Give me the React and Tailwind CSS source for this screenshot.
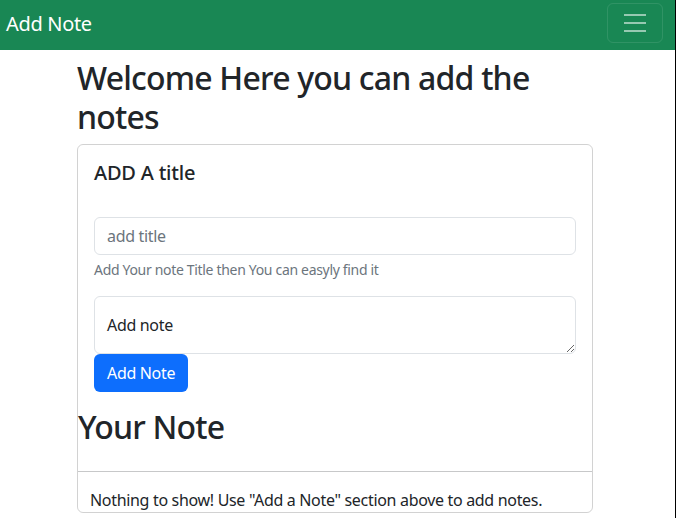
import React from "react";

export default function App() {
  return (
    <div className="min-h-[518px] bg-white border-r border-black font-['Noto_Sans',sans-serif] tracking-[-0.02em] text-[#212529]">
      <nav className="h-[50px] bg-[#198754] flex justify-between pl-[6px] pr-[12px]">
        <span className="text-[20px] leading-[30px] text-white mt-[9px]">Add Note</span>
        <button className="mt-[3px] w-[56px] h-[40px] border border-white/10 rounded-[6px] flex items-center justify-center">
          <svg width="30" height="30" viewBox="0 0 30 30">
            <path d="M4 7h22M4 15h22M4 23h22" stroke="rgba(255,255,255,0.55)" strokeWidth="2" strokeLinecap="butt" />
          </svg>
        </button>
      </nav>
      <div className="w-[516px] ml-[77px] pt-[9px]">
        <h1 className="text-[32px] leading-[38.5px] font-medium tracking-[-0.025em] mb-2">Welcome Here you can add the notes</h1>
        <div className="border border-black/[.175] rounded-[6px]">
          <div className="p-4">
            <h5 className="text-[20px] leading-[24px] font-medium tracking-[-0.01em]">ADD A title</h5>
            <input
              className="mt-[32px] block w-full h-[38px] border border-[#dee2e6] rounded-[6px] px-3 text-[16px] leading-[24px] placeholder:text-[#6c757d] outline-none"
              placeholder="add title"
            />
            <div className="mt-1 text-[14px] leading-[21px] text-[#6c757d]">Add Your note Title then You can easyly find it</div>
            <textarea
              className="mt-4 block w-full h-[58px] border border-[#dee2e6] rounded-[6px] px-3 pt-[16px] text-[16px] leading-[24px] text-[#212529] outline-none"
              defaultValue="Add note"
            />
            <button className="block h-[38px] px-[13px] bg-[#0d6efd] text-white rounded-[6px] text-[16px] leading-[24px]">Add Note</button>
          </div>
          <h1 className="text-[32px] leading-[38.5px] font-medium tracking-[-0.025em]">Your Note</h1>
          <hr className="mt-6 mb-4 border-0 border-t border-[#212529] opacity-25" />
          <div className="px-3 text-[16px] leading-[24px]">Nothing to show! Use "Add a Note" section above to add notes.</div>
        </div>
      </div>
    </div>
  );
}
